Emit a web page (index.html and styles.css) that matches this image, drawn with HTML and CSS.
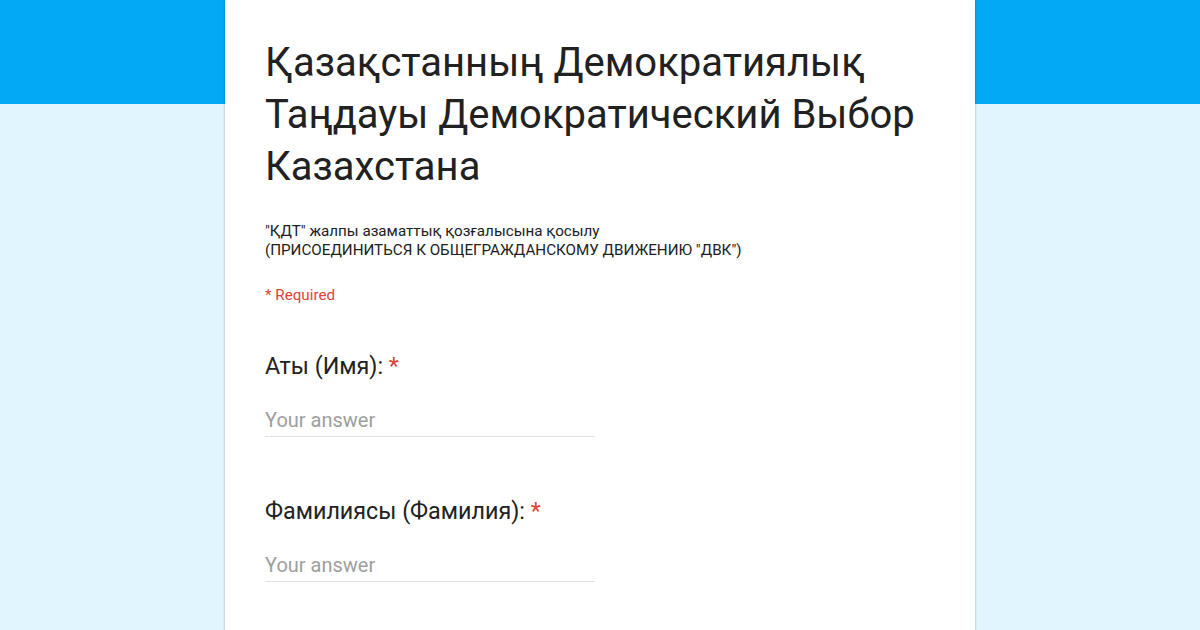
FILE: index.html
```html
<!DOCTYPE html>
<html lang="kk">
<head>
    <meta charset="UTF-8">
    <meta name="viewport" content="width=device-width, initial-scale=1.0">
    <title>Қазақстанның Демократиялық Таңдауы</title>
    <link rel="stylesheet" href="styles.css">
</head>
<body>

<div class="header-band"></div>

<div class="form-card">
    <h1 class="form-title">Қазақстанның Демократиялық Таңдауы Демократический Выбор Казахстана</h1>

    <div class="form-desc">
        "ҚДТ" жалпы азаматтық қозғалысына қосылу<br>
        (ПРИСОЕДИНИТЬСЯ К ОБЩЕГРАЖДАНСКОМУ ДВИЖЕНИЮ "ДВК")
    </div>

    <div class="required-note">* Required</div>

    <div class="question">
        <div class="question-label">Аты (Имя): <span class="star">*</span></div>
        <input type="text" class="answer" placeholder="Your answer">
    </div>

    <div class="question">
        <div class="question-label">Фамилиясы (Фамилия): <span class="star">*</span></div>
        <input type="text" class="answer" placeholder="Your answer">
    </div>
</div>

</body>
</html>
```

FILE: styles.css
```css
body {
    margin: 0;
    background-color: #e1f5fe;
    font-family: Roboto, "Liberation Sans", Arial, sans-serif;
    color: #212121;
    overflow: hidden;
    height: 630px;
}

.header-band {
    position: absolute;
    top: 0;
    left: 0;
    right: 0;
    height: 104px;
    background-color: #03a9f4;
}

.form-card {
    position: relative;
    width: 750px;
    height: 630px;
    margin: 0 auto;
    background-color: #fff;
    box-shadow: 0 0 2px rgba(0, 0, 0, 0.2), 0 2px 3px rgba(0, 0, 0, 0.12);
    padding: 37px 40px 0 40px;
    box-sizing: border-box;
    overflow: hidden;
}

.form-title {
    margin: 0;
    font-size: 40px;
    font-weight: 400;
    line-height: 52px;
    width: 670px;
}

.form-desc {
    margin-top: 29px;
    font-size: 15.2px;
    line-height: 19px;
    color: #212121;
}

.required-note {
    margin-top: 26px;
    font-size: 15.2px;
    color: #db4437;
}

.question {
    margin-top: 47px;
}

.question + .question {
    margin-top: 59px;
}

.question-label {
    font-size: 23.3px;
    line-height: 30px;
}

.star {
    color: #db4437;
}

.answer {
    display: block;
    margin-top: 23px;
    width: 330px;
    border: none;
    border-bottom: 1px solid #e0e0e0;
    padding: 4px 0 4px 0;
    font-family: Roboto, "Liberation Sans", Arial, sans-serif;
    font-size: 20px;
    outline: none;
}

.answer::placeholder {
    color: #9e9e9e;
}
```
